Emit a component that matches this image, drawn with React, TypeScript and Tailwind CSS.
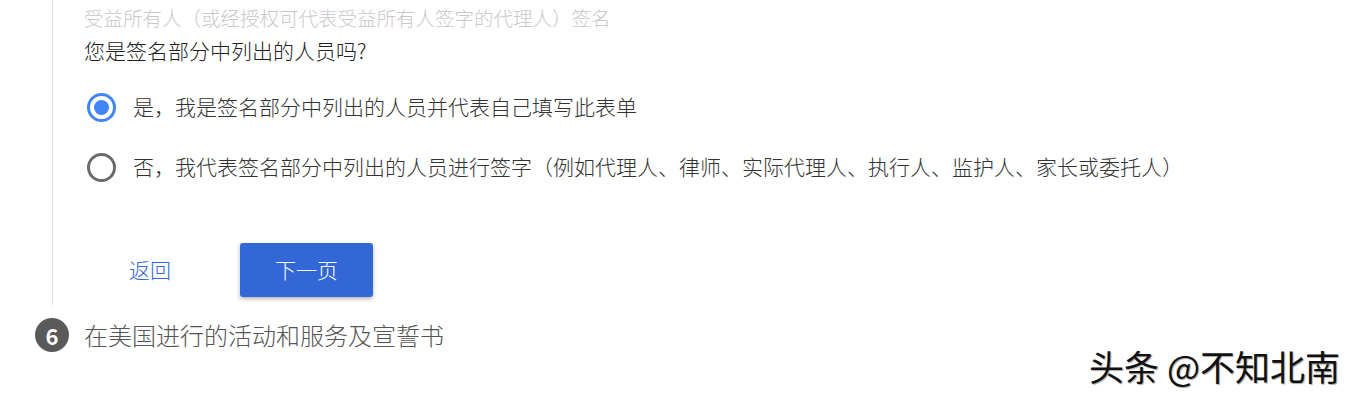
import React from 'react';

const font = { fontFamily: '"Noto Sans CJK SC", "Noto Sans", sans-serif' };

const Radio: React.FC<{ checked?: boolean; label: string }> = ({ checked, label }) => (
    <label className="flex items-center h-[40px] cursor-pointer">
        <span
            className={`ml-[3px] w-[29px] h-[29px] rounded-full border-[3px] flex items-center justify-center shrink-0 ${
                checked ? 'border-[#4285f4]' : 'border-[#6b6b6b]'
            }`}
        >
            {checked && <span className="w-[15px] h-[15px] rounded-full bg-[#4285f4]" />}
        </span>
        <span className="ml-[17px] -mt-[3px] text-[21px] leading-[28px] font-light text-[#333]">{label}</span>
    </label>
);

export default function App() {
    return (
        <div className="relative w-full h-[397px] bg-white overflow-hidden" style={font}>
            {/* 步骤内容 */}
            <div className="ml-[52px] border-l border-[#e3e3e3] pl-[31px] pt-[4px] pb-[8px]">
                <div className="text-[19.5px] leading-[28px] font-light text-[#c8c8c8]">
                    受益所有人（或经授权可代表受益所有人签字的代理人）签名
                </div>
                <div className="mt-[4px] text-[21px] leading-[28px] font-light text-[#202124]">
                    您是签名部分中列出的人员吗?
                </div>

                <div className="mt-[23px] flex flex-col gap-[20px]">
                    <Radio checked label="是，我是签名部分中列出的人员并代表自己填写此表单" />
                    <Radio label="否，我代表签名部分中列出的人员进行签字（例如代理人、律师、实际代理人、执行人、监护人、家长或委托人）" />
                </div>

                <div className="mt-[56px] flex items-center gap-[24px]">
                    <button className="w-[132px] h-[54px] text-[21px] font-light text-[#3367d6]">返回</button>
                    <button className="w-[133px] h-[54px] rounded-[3px] bg-[#3367d6] text-white text-[21px] font-light shadow-[0_2px_4px_rgba(0,0,0,0.3)]">
                        下一页
                    </button>
                </div>
            </div>

            {/* 下一步骤 */}
            <div className="ml-[35px] mt-[13px] flex items-center">
                <span className="w-[34px] h-[34px] rounded-full bg-[#5a5a5a] text-white text-[22px] font-bold flex items-center justify-center">
                    6
                </span>
                <span className="ml-[15px] text-[24px] leading-[34px] font-light text-[#555]">
                    在美国进行的活动和服务及宣誓书
                </span>
            </div>

            {/* 水印 */}
            <div className="absolute right-[16px] top-[345px] text-[35px] leading-[42px] text-[#111] [text-shadow:1px_1px_1px_rgba(0,0,0,0.35)]">
                头条 @不知北南
            </div>
        </div>
    );
}
